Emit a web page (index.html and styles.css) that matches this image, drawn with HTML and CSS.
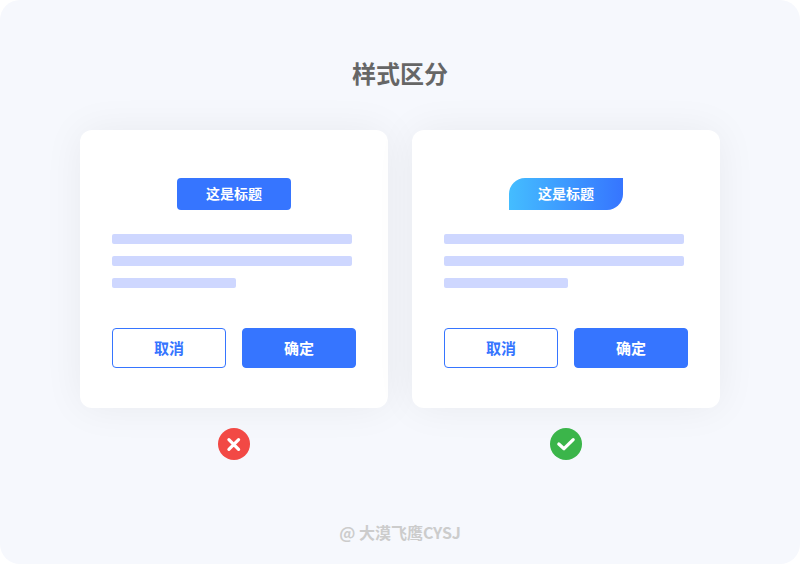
FILE: index.html
```html
<!DOCTYPE html>
<html lang="zh-CN">
<head>
  <meta charset="UTF-8" />
  <meta name="viewport" content="width=device-width, initial-scale=1.0"/>
  <title>样式区分</title>
  <link rel="stylesheet" href="styles.css">
</head>
<body>
  <main class="page">
    <h1>样式区分</h1>

    <div class="examples">
      <section class="example">
        <div class="card">
          <h2 class="label">这是标题</h2>
          <div class="lines">
            <div class="line"></div>
            <div class="line"></div>
            <div class="line short"></div>
          </div>
          <div class="actions">
            <button type="button" class="btn outline">取消</button>
            <button type="button" class="btn">确定</button>
          </div>
        </div>
        <svg class="mark" viewBox="0 0 32 32" role="img" aria-label="错误">
          <circle cx="16" cy="16" r="16" fill="#f24945"/>
          <path d="M10.9 11.7L20.6 21.3M20.6 11.7L10.9 21.3" fill="none" stroke="#fff" stroke-width="3.2" stroke-linecap="round"/>
        </svg>
      </section>

      <section class="example">
        <div class="card">
          <h2 class="label gradient">这是标题</h2>
          <div class="lines">
            <div class="line"></div>
            <div class="line"></div>
            <div class="line short"></div>
          </div>
          <div class="actions">
            <button type="button" class="btn outline">取消</button>
            <button type="button" class="btn">确定</button>
          </div>
        </div>
        <svg class="mark" viewBox="0 0 32 32" role="img" aria-label="正确">
          <circle cx="16" cy="16" r="16" fill="#3bb54a"/>
          <path d="M8.8 16L14 20.7L23.2 11.6" fill="none" stroke="#fff" stroke-width="3.2" stroke-linecap="round" stroke-linejoin="round"/>
        </svg>
      </section>
    </div>

    <footer>@ 大漠飞鹰CYSJ</footer>
  </main>
</body>
</html>
```

FILE: styles.css
```css
* {
  box-sizing: border-box;
}
body {
  margin: 0;
  background: #fff;
  font-family: "Noto Sans CJK SC", sans-serif;
}
.page {
  display: flex;
  flex-direction: column;
  align-items: center;
  min-height: 100vh;
  padding: 56px 24px 20px;
  background: #f6f8fd;
  border-radius: 20px;
}
h1 {
  margin: 0 0 40px;
  font-size: 24px;
  line-height: 34px;
  font-weight: bold;
  color: #666;
}
.examples {
  display: grid;
  grid-template-columns: 1fr 1fr;
  gap: 24px;
  width: 100%;
  max-width: 640px;
}
.example {
  display: flex;
  flex-direction: column;
  align-items: center;
  gap: 20px;
}
.card {
  width: 100%;
  padding: 48px 32px 40px;
  background: #fff;
  border-radius: 12px;
  box-shadow: 0 0 40px rgba(0, 0, 0, 0.06);
}
.label {
  width: fit-content;
  margin: 0 auto 24px;
  padding: 0 29px 2px;
  font-size: 14px;
  line-height: 30px;
  font-weight: bold;
  color: #fff;
  background: #3675ff;
  border-radius: 4px;
}
.gradient {
  background: linear-gradient(90deg, #44bdff, #3675ff);
  border-radius: 16px 0;
}
.lines {
  display: grid;
  gap: 12px;
  margin: 0 4px 40px 0;
}
.line {
  height: 10px;
  background: #ced7ff;
  border-radius: 2px;
}
.short {
  width: 124px;
}
.actions {
  display: grid;
  grid-template-columns: 1fr 1fr;
  gap: 16px;
}
.btn {
  height: 40px;
  padding: 0 0 2px;
  font-family: inherit;
  font-size: 15px;
  font-weight: bold;
  color: #fff;
  background: #3675ff;
  border: 1px solid #3675ff;
  border-radius: 4px;
  cursor: pointer;
}
.outline {
  color: #3675ff;
  background: #fff;
}
.mark {
  width: 32px;
  height: 32px;
}
footer {
  margin-top: auto;
  font-size: 16px;
  line-height: 24px;
  font-weight: bold;
  color: #ccc;
}
```
